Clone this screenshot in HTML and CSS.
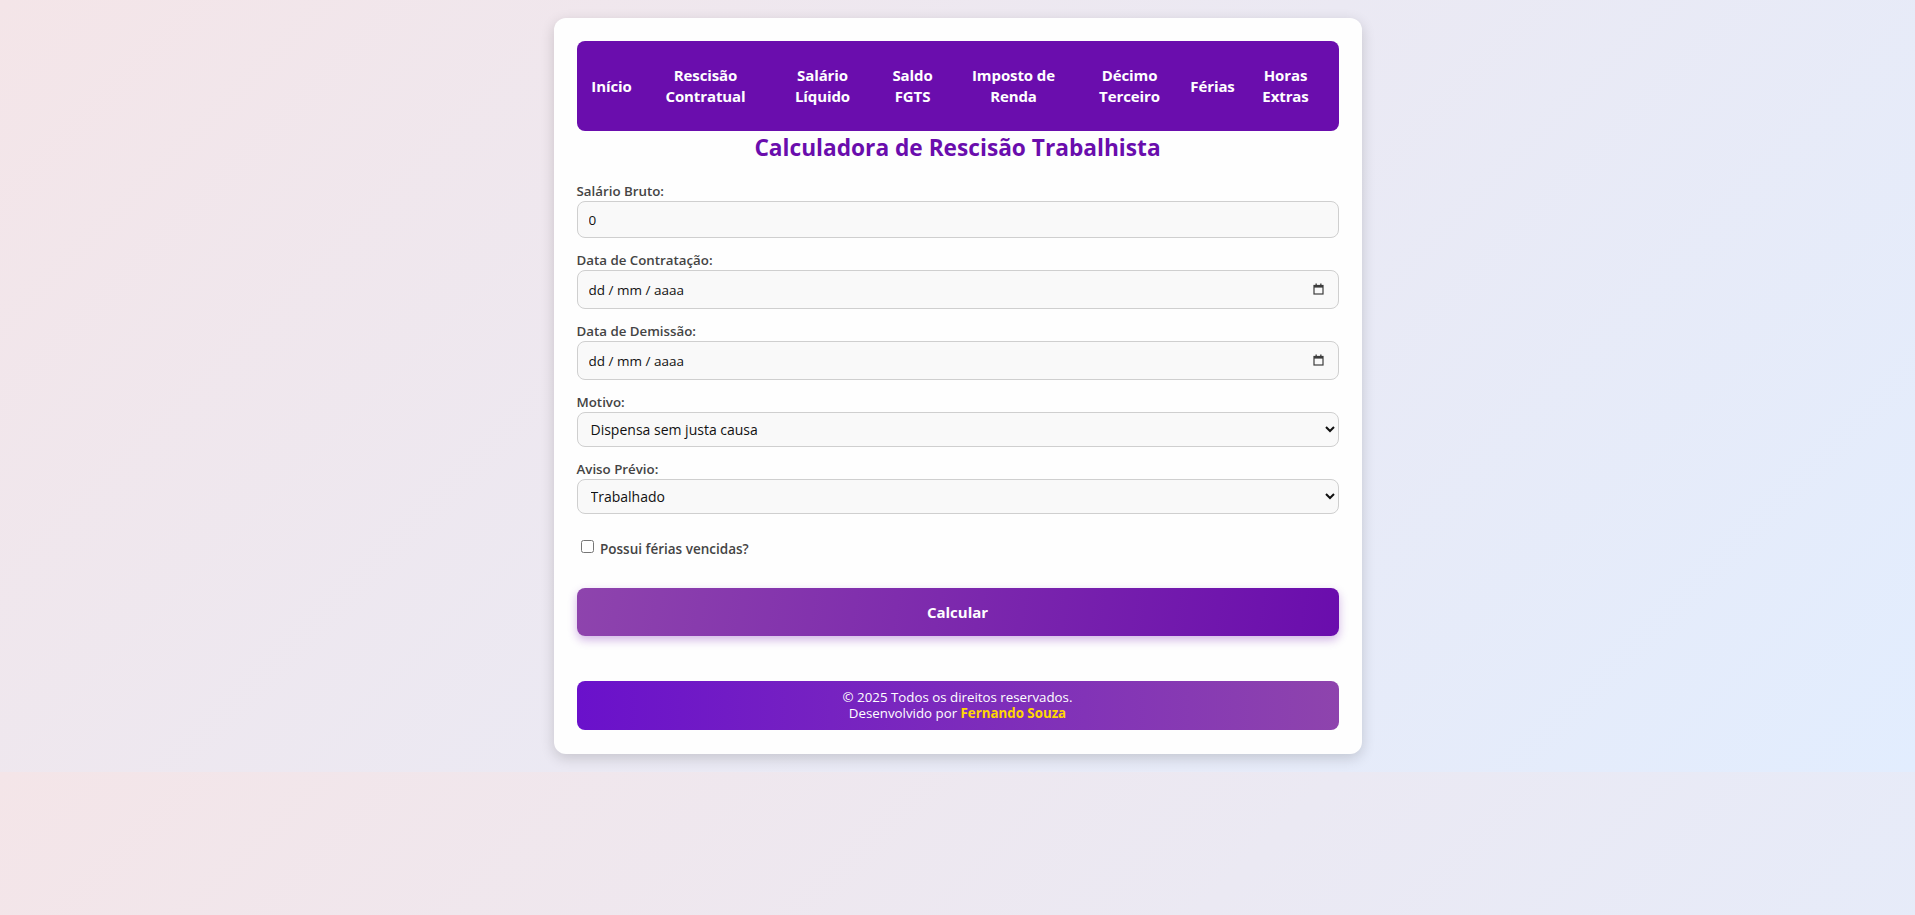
FILE: index.html
```html
<!DOCTYPE html>
<html lang="pt-BR">
<head>
<meta charset="utf-8">
<title>Calculadora de Rescisão Trabalhista</title>
<link rel="stylesheet" href="styles.css">
</head>
<body>
<div class="card">
  <nav class="nav">
    <a class="nav-link" href="#">Início</a>
    <a class="nav-link" href="#">Rescisão<br>Contratual</a>
    <a class="nav-link" href="#">Salário<br>Líquido</a>
    <a class="nav-link" href="#">Saldo<br>FGTS</a>
    <a class="nav-link" href="#">Imposto de<br>Renda</a>
    <a class="nav-link" href="#">Décimo<br>Terceiro</a>
    <a class="nav-link" href="#">Férias</a>
    <a class="nav-link" href="#">Horas<br>Extras</a>
  </nav>
  <h2 class="title">Calculadora de Rescisão Trabalhista</h2>
  <form class="form">
    <div class="group">
      <label class="label" for="salario">Salário Bruto:</label>
      <input class="field field-text" id="salario" type="text" value="0">
    </div>
    <div class="group">
      <label class="label" for="contratacao">Data de Contratação:</label>
      <div class="date-field">
        <input class="field field-date" id="contratacao" type="text" placeholder="dd / mm / aaaa">
        <svg class="cal-icon" width="11" height="12" viewBox="0 0 11 12"><rect x="1" y="2.5" width="9" height="8.5" fill="none" stroke="#3c3c3c" stroke-width="1.2"/><rect x="1" y="2" width="9" height="2.6" fill="#3c3c3c"/><rect x="2.5" y="0.5" width="1.3" height="2" fill="#3c3c3c"/><rect x="7.2" y="0.5" width="1.3" height="2" fill="#3c3c3c"/></svg>
      </div>
    </div>
    <div class="group">
      <label class="label" for="demissao">Data de Demissão:</label>
      <div class="date-field">
        <input class="field field-date" id="demissao" type="text" placeholder="dd / mm / aaaa">
        <svg class="cal-icon" width="11" height="12" viewBox="0 0 11 12"><rect x="1" y="2.5" width="9" height="8.5" fill="none" stroke="#3c3c3c" stroke-width="1.2"/><rect x="1" y="2" width="9" height="2.6" fill="#3c3c3c"/><rect x="2.5" y="0.5" width="1.3" height="2" fill="#3c3c3c"/><rect x="7.2" y="0.5" width="1.3" height="2" fill="#3c3c3c"/></svg>
      </div>
    </div>
    <div class="group">
      <label class="label" for="motivo">Motivo:</label>
      <select class="field field-select" id="motivo">
        <option>Dispensa sem justa causa</option>
      </select>
    </div>
    <div class="group">
      <label class="label" for="aviso">Aviso Prévio:</label>
      <select class="field field-select" id="aviso">
        <option>Trabalhado</option>
      </select>
    </div>
    <div class="check-row">
      <label class="check-label"><input type="checkbox" class="check"> Possui férias vencidas?</label>
    </div>
    <button type="button" class="btn">Calcular</button>
  </form>
  <footer class="footer">
    <p class="footer-line">© 2025 Todos os direitos reservados.</p>
    <p class="footer-line">Desenvolvido por <span class="author">Fernando Souza</span></p>
  </footer>
</div>
</body>
</html>
```
FILE: styles.css
```css
html {
  margin: 0;
}
body {
  margin: 0;
  padding: 18px 0;
  font-family: "Open Sans", "Noto Sans", sans-serif;
  background: linear-gradient(135deg, #f4e5e8, #e2edfe);
  color: #333;
}
.card {
  box-sizing: border-box;
  width: 808px;
  margin: 0 auto;
  padding: 23px 23px 24px;
  background: #fefefe;
  border-radius: 12px;
  box-shadow: 0 4px 14px rgba(0, 0, 0, 0.16);
}
.nav {
  display: grid;
  grid-template-columns: 70px 118px 116px 64px 138px 94px 72px 74px;
  align-items: center;
  height: 90px;
  background: #6a0dad;
  border-radius: 8px;
}
.nav-link {
  color: #fff;
  text-decoration: none;
  font-weight: 700;
  font-size: 15px;
  line-height: 21px;
  text-align: center;
  letter-spacing: -0.1px;
}
.title {
  margin: 0 0 17px;
  text-align: center;
  color: #6a0dad;
  font-size: 22.7px;
  line-height: 33px;
  font-weight: 700;
}
.form {
  display: flex;
  flex-direction: column;
}
.group {
  display: flex;
  flex-direction: column;
  margin-bottom: 12px;
}
.label {
  font-size: 13.3px;
  line-height: 20px;
  font-weight: 600;
  color: #444;
}
.field {
  box-sizing: border-box;
  width: 100%;
  margin: 0;
  border: 1px solid #cfcfcf;
  border-radius: 8px;
  background: #f9f9f9;
  font-family: "Open Sans", "Noto Sans", sans-serif;
  font-size: 13.5px;
  color: #111;
  padding: 0 11px;
}
.field-text {
  height: 37px;
}
.date-field {
  position: relative;
}
.field-date {
  height: 39px;
}
.field-date::placeholder {
  color: #111;
  opacity: 1;
}
.cal-icon {
  position: absolute;
  right: 15px;
  top: 13px;
}
.field-select {
  height: 35px;
  padding: 0 9px;
  font-size: 14px;
}
.check-row {
  margin-top: 11px;
  height: 20px;
}
.check-label {
  font-size: 13.5px;
  line-height: 20px;
  font-weight: 600;
  color: #444;
}
.check {
  width: 13px;
  height: 13px;
  margin: 3px 3px 3px 4px;
  vertical-align: 1px;
}
.btn {
  margin-top: 31px;
  height: 48px;
  border: none;
  border-radius: 8px;
  background: linear-gradient(100deg, #8e44ad, #6a0dad);
  color: #fff;
  font-family: "Open Sans", "Noto Sans", sans-serif;
  font-size: 15px;
  font-weight: 700;
  box-shadow: 0 4px 10px rgba(106, 13, 173, 0.3);
  cursor: pointer;
}
.footer {
  margin-top: 45px;
  padding: 8px 0 9px;
  border-radius: 8px;
  background: linear-gradient(90deg, #6a11cb, #8e44ad);
  color: #fff;
  text-align: center;
}
.footer-line {
  margin: 0;
  font-size: 13.3px;
  line-height: 16px;
}
.author {
  color: #ffd700;
  font-weight: 700;
}
```
